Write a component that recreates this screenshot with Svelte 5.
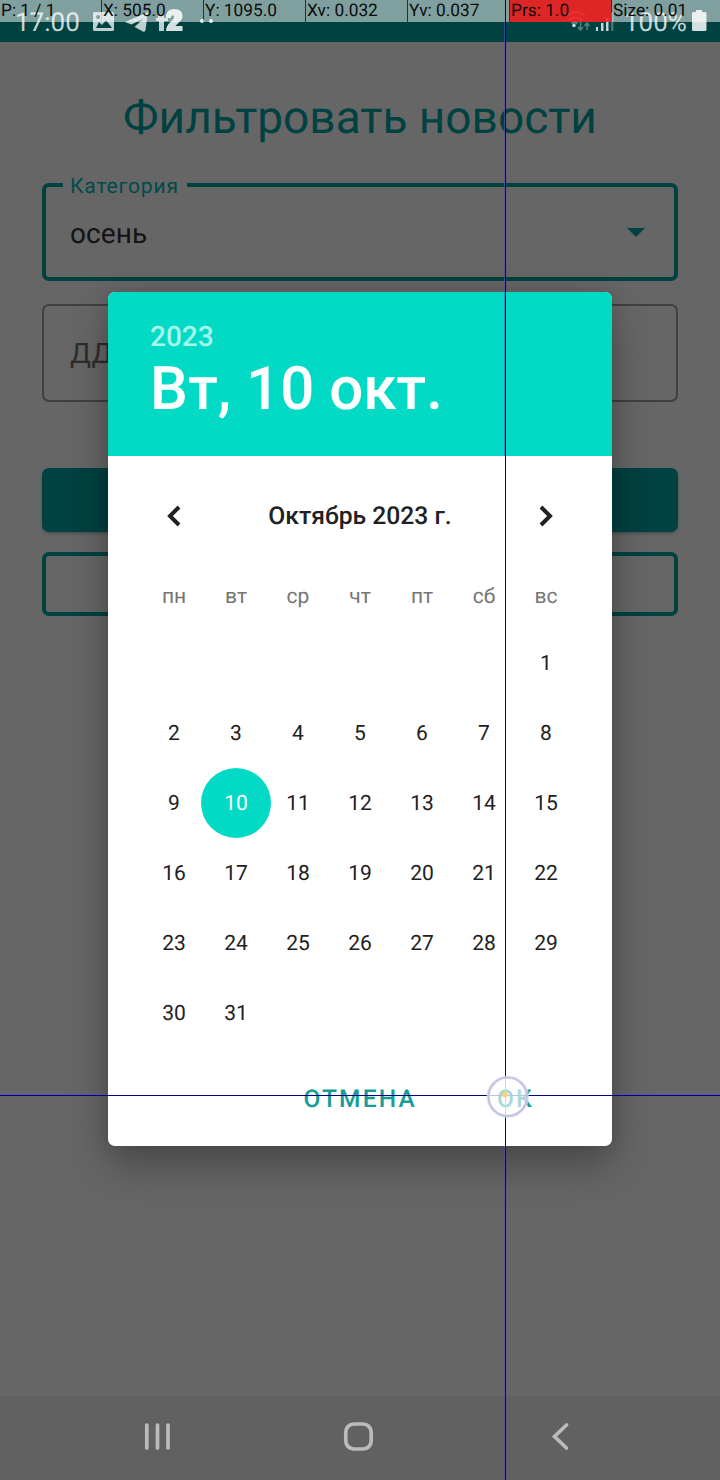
<script>
  const readings = ['P: 1 / 1', 'X: 505.0', 'Y: 1095.0', 'Xv: 0.032', 'Yv: 0.037', 'Prs: 1.0', 'Size: 0.01'];
  const weekdays = ['пн', 'вт', 'ср', 'чт', 'пт', 'сб', 'вс'];
  const days = Array.from({ length: 31 }, (_, i) => i + 1);
  const selected = 10;
</script>

<div class="phone">
  <header class="status">
    <span class="clock">17:00</span>
    <svg class="left-icons" width="124" height="42" viewBox="92 0 124 42">
      <path fill="#bdcfcf" fill-rule="evenodd" d="M94.500 12h18a1.500 1.500 0 0 1 1.500 1.500v16a1.500 1.500 0 0 1-1.500 1.500h-18a1.500 1.500 0 0 1-1.500-1.500v-16a1.500 1.500 0 0 1 1.500-1.500zm1.500 16h16l-6-8-4 5-3-3zM98 15a2 2 0 1 0 .1 0z" />
      <path fill="#bdcfcf" d="M125 22 148 12l-2.500 18q-.5 2.500-2.500 1.500L134.500 27l9-8.500-12 6z" />
      <path fill="#bdcfcf" d="M158 15h6v3h4v3h-4v10h-5V21h-3v-3h2z" />
      <path fill="#d5e1e1" d="M166 18c0-6 3-9 8-9 6 0 8.500 3 8.500 7 0 5-5 7-7 10h7v5H166c0-8 8-10 8-14 0-3-3-2-3 1z" />
      <circle cx="202" cy="21" r="2" fill="#d5e1e1" /><circle cx="211" cy="21" r="2" fill="#d5e1e1" />
    </svg>
    <svg class="signal" width="54" height="42" viewBox="562 0 54 42">
      <g fill="none" stroke="#bdcfcf" stroke-width="2.500" opacity=".45">
        <path d="M566 16q9-8 19 0M569 20q6-5 13 0M571.500 23.500q3-2 6 0" />
        <path stroke-width="1.500" d="M580.500 22v8m-2.500-3 2.500 3 2.500-3M587 30v-7m-2.500 3 2.500-3 2.500 3" />
      </g>
      <circle cx="574" cy="25.500" r="1.700" fill="#d5e1e1" />
      <path fill="#c6d5d5" d="M596 27h2v4h-2zm5-4h2.500v8H601zm5-5h2.500v13H606z" />
      <path fill="#c6d5d5" opacity=".35" d="M611 12h2.500v19H611z" />
    </svg>
    <span class="charge">100%</span>
    <svg class="battery" width="16" height="42" viewBox="691 0 16 42"><path fill="#d5e1e1" d="M696 10h6v2h3q1.500 0 1.500 1.500v16q0 1.500-1.500 1.500h-11.500q-1.500 0-1.500-1.500v-16q0-1.500 1.500-1.500h2.500z" /></svg>
  </header>

  <main>
    <h1>Фильтровать новости</h1>
    <div class="field active">
      <span class="label">Категория</span>
      <span>осень</span>
      <svg width="18" height="9" viewBox="0 0 18 9"><path d="M0 0h18L9 9z" fill="#004141" /></svg>
    </div>
    <div class="field date"><span>ДД</span></div>
    <div class="filled"></div>
    <div class="outlined"></div>
  </main>

  <nav>
    <svg width="720" height="84" viewBox="0 1396 720 84" fill="none" stroke="#bbb" stroke-width="3.700" stroke-linecap="round">
      <path d="M146.800 1425v23M157.500 1425v23M168 1425v23" />
      <rect x="345.800" y="1424" width="25.400" height="25" rx="8" />
      <path stroke-linejoin="miter" d="M566.500 1425l-12 11.500 12 11.500" />
    </svg>
  </nav>

  <section class="dialog">
    <div class="head">
      <div class="year">2023</div>
      <div class="picked">Вт, 10 окт.</div>
    </div>
    <div class="month">
      <svg width="14" height="22" viewBox="0 0 14 22"><path d="M12 2 3 11l9 9" /></svg>
      <span>Октябрь 2023 г.</span>
      <svg width="14" height="22" viewBox="0 0 14 22"><path d="m2 2 9 9-9 9" /></svg>
    </div>
    <div class="week">
      {#each weekdays as d}<span>{d}</span>{/each}
    </div>
    <div class="days">
      {#each days as d}<span class:first={d === 1} class:selected={d === selected}>{d}</span>{/each}
    </div>
    <div class="actions"><span>ОТМЕНА</span><span>ОК</span></div>
  </section>

  <div class="readings">
    {#each readings as r, i}<span class:hot={i === 5}>{r}</span>{/each}
  </div>

  <svg class="pointer" width="720" height="1480" viewBox="0 0 720 1480">
    <path d="M504.500 22v434M504.500 1146v334M0 1094.500h108M612 1094.500h108" stroke="#5050c8" stroke-opacity=".55" />
    <path d="M505.500 0v1480M0 1095.500h720" stroke="#00008c" />
    <circle cx="507.700" cy="1096.700" r="19.500" fill="#fff" fill-opacity=".62" />
    <path d="M505.500 1077v39" stroke="#e2d9a0" />
    <path d="M489 1095.500h38" stroke="#b8c2df" />
    <circle cx="507.700" cy="1096.700" r="19.500" fill="none" stroke="#dcdcf5" stroke-width="3.500" opacity=".75" />
    <circle cx="507.700" cy="1096.700" r="19.200" fill="none" stroke="#bfc0e0" stroke-width="1.700" />
    <circle cx="505" cy="1094.500" r="3" fill="#f3d47c" />
  </svg>
</div>

<style>
  :global(body) { margin: 0; background: #666; }
  .phone { position: relative; width: 720px; height: 1480px; overflow: hidden; display: flex; flex-direction: column; background: #666; font-family: Roboto, sans-serif; text-rendering: geometricPrecision; }
  .phone * { box-sizing: border-box; }
  svg { display: block; flex: none; }
  .status { display: flex; height: 42px; background: #004141; color: #c6d5d5; font-size: 26px; line-height: 46px; padding-left: 14px; padding-right: 13px; }
  .clock { width: 78px; padding-left: 1px; }
  .signal { margin-left: auto; }
  .charge { width: 75px; padding-left: 8px; white-space: nowrap; }
  main { flex: 1; padding: 45px 42px 0; display: flex; flex-direction: column; }
  h1 { margin: 0; height: 96px; font-weight: 400; font-size: 46px; line-height: 62px; text-align: center; color: #004141; white-space: nowrap; }
  .field { position: relative; height: 98px; border: 2px solid #404040; border-radius: 7px; display: flex; align-items: center; justify-content: space-between; padding: 0 31px 0 26px; font-size: 28px; color: #2d2d2d; letter-spacing: .1px; }
  .active { border: 4px solid #004141; padding: 2px 29px 0 24px; color: #141414; }
  .active svg { margin-top: -2px; }
  .label { position: absolute; left: 17px; top: -13px; width: 124px; padding-left: 7px; background: #666; color: #004b4a; font-size: 21px; line-height: 27px; letter-spacing: .850px; }
  .date { margin-top: 23px; }
  .filled { margin-top: 66px; height: 64px; border-radius: 7px; background: #004141; box-shadow: 0 2px 3px #0003; }
  .outlined { margin-top: 20px; height: 64px; border: 4px solid #004141; border-radius: 7px; }
  nav { height: 84px; background: #616161; }
  .dialog { position: absolute; left: 108px; top: 292px; width: 504px; height: 854px; display: flex; flex-direction: column; background: #fff; border-radius: 7px; overflow: hidden; box-shadow: 0 20px 42px rgba(0, 0, 0, .28), 0 0 16px rgba(0, 0, 0, .12); color: #212121; }
  .head { flex: none; height: 164px; padding: 28px 42px 0; background: #03dac6; color: #fff; font-weight: 500; }
  .year { font-size: 28px; line-height: 33px; color: #a5f7ea; }
  .picked { font-size: 60px; line-height: 72px; white-space: nowrap; }
  .month { flex: none; height: 120px; display: flex; align-items: center; justify-content: space-between; padding: 0 59px; font-size: 24.700px; font-weight: 500; }
  .month path { fill: none; stroke: #212121; stroke-width: 4; }
  .week { flex: none; height: 52px; display: grid; grid-template-columns: repeat(7, 62px); justify-content: center; text-align: center; font-size: 21px; line-height: 42px; color: #757575; }
  .days { flex: none; display: grid; grid-template-columns: repeat(7, 62px); grid-auto-rows: 70px; justify-content: center; text-align: center; font-size: 21px; line-height: 72px; }
  .first { grid-column: 7; }
  .selected { width: 70px; height: 70px; margin-left: -4px; border-radius: 50%; background: #03dac6; color: #fff; }
  .actions { flex: 1; display: flex; justify-content: flex-end; gap: 80px; padding-right: 78px; font-size: 24.500px; font-weight: 500; letter-spacing: 2.200px; line-height: 101px; color: #189c98; }
  .readings { position: absolute; left: 0; top: 0; width: 720px; height: 22px; display: grid; grid-template-columns: repeat(6, 101px) 108px; column-gap: 1px; font-size: 17.300px; line-height: 23px; color: #0b0b0b; }
  .readings span { height: 22px; background: rgba(255, 255, 255, .5); padding-left: 1px; white-space: nowrap; }
  .readings .hot { background: rgba(255, 34, 34, .87); }
  .pointer { position: absolute; left: 0; top: 0; }
</style>
